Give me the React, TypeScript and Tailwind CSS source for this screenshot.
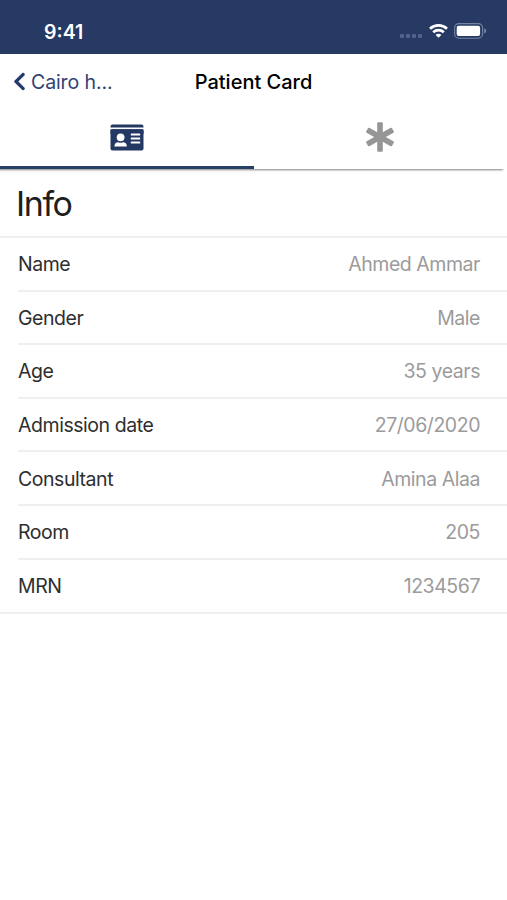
import { useState } from "react";
import { FaChevronLeft } from "react-icons/fa";

const INFO = [
  { label: "Name", value: "Ahmed Ammar" },
  { label: "Gender", value: "Male" },
  { label: "Age", value: "35 years" },
  { label: "Admission date", value: "27/06/2020" },
  { label: "Consultant", value: "Amina Alaa" },
  { label: "Room", value: "205" },
  { label: "MRN", value: "1234567" },
];

const TABS = [
  { key: "info", Icon: IdCardIcon },
  { key: "medical", Icon: AsteriskIcon },
];

function IdCardIcon() {
  return (
    <svg width="34" height="27" viewBox="0 0 34 27" fill="currentColor">
      <path d="M0.5 3.4 V2.4 A2 2 0 0 1 2.5 .4 H31.5 A2 2 0 0 1 33.5 2.4 V3.4 Z" />
      <rect x=".5" y="5.2" width="33" height="21.2" rx="2" />
      <path d="M.5 5.2 H33.5 V10 H.5 Z" />
      <g fill="white">
        <circle cx="10.6" cy="13.3" r="3.9" />
        <path d="M4.4 22.6 C4.4 19.8 6 18.3 8.2 18.3 C9.8 19 11.4 19 13 18.3 C15.2 18.3 16.9 19.8 16.9 22.6 Z" />
        <rect x="20.8" y="9.6" width="9.4" height="1.9" rx=".5" />
        <rect x="20.8" y="13.6" width="9.4" height="1.9" rx=".5" />
        <rect x="20.8" y="17.6" width="9.4" height="1.9" rx=".5" />
      </g>
    </svg>
  );
}

function AsteriskIcon() {
  return (
    <svg width="32" height="32" viewBox="-16 -16 32 32" fill="currentColor">
      <rect x="-2.8" y="-14.8" width="5.6" height="29.6" rx="1" />
      <rect x="-2.8" y="-14.8" width="5.6" height="29.6" rx="1" transform="rotate(61)" />
      <rect x="-2.8" y="-14.8" width="5.6" height="29.6" rx="1" transform="rotate(-61)" />
    </svg>
  );
}

function StatusBar() {
  return (
    <div className="flex h-[54px] items-center bg-[#263a63] pr-[20px] pl-[44px] pt-[8px] text-white">
      <span className="pt-px text-[19.5px] leading-6 font-semibold">9:41</span>
      <div className="ml-auto flex items-center">
        <div className="mt-[9px] mr-[7px] flex gap-[2px]">
          {[0, 1, 2, 3].map((i) => (
            <span key={i} className="h-1 w-1 rounded-[1px] bg-[#52638a]" />
          ))}
        </div>
        <svg width="19" height="14" viewBox="0 0 19 14" className="mr-[6px]" fill="none" stroke="white" strokeWidth="2.7">
          <path d="M1 4.8 C5.8 .3 13.2 .3 18 4.8" />
          <path d="M4.2 8.2 C7.2 5.4 11.8 5.4 14.8 8.2" />
          <path d="M9.5 13.8 L6.6 10.9 C8.2 9.5 10.8 9.5 12.4 10.9 Z" fill="white" stroke="none" />
        </svg>
        <svg width="33" height="16" viewBox="0 0 33 16">
          <rect x=".6" y=".6" width="28" height="14.6" rx="4.4" fill="none" stroke="#7785a3" strokeWidth="1.1" />
          <rect x="2.7" y="2.7" width="23.4" height="10.4" rx="2" fill="white" />
          <path d="M30.2 5.3 C32.8 6.2 32.8 9.6 30.2 10.5 Z" fill="#7785a3" />
        </svg>
      </div>
    </div>
  );
}

export default function App() {
  const [tab, setTab] = useState("info");

  return (
    <div className="h-[900px] w-[507px] overflow-hidden bg-white font-['Inter',sans-serif]">
      <StatusBar />

      <header className="grid h-[54px] grid-cols-[1fr_auto_1fr] items-center px-[13px] pt-[2px]">
        <button className="flex items-center gap-[5px] text-[19.5px] tracking-[-0.1px] text-[#304371]">
          <FaChevronLeft className="mb-[2px] h-[21px] w-[13px] text-[#233a6e]" />
          <span className="pt-px">Cairo h...</span>
        </button>
        <h1 className="text-[20px] font-medium text-black">Patient Card</h1>
      </header>

      <div className="grid h-[61px] grid-cols-2 shadow-[-3px_2px_2px_-1px_rgba(0,0,0,0.5)]">
        {TABS.map(({ key, Icon }) => (
          <button
            key={key}
            onClick={() => setTab(key)}
            className={
              tab === key
                ? "flex items-center justify-center border-b-[3px] border-[#263f64] text-[#233863]"
                : "flex items-center justify-center border-b-[3px] border-transparent text-[#969696]"
            }
          >
            <Icon />
          </button>
        ))}
      </div>

      <section>
        <h2 className="flex h-[69px] items-center border-b-2 border-[#efefef] pl-4 pt-[2px] text-[34px] tracking-[-1.4px] text-[#1e1e1e]">
          Info
        </h2>
        <ul className="border-b-2 border-[#efefef]">
          {INFO.map((row) => (
            <li key={row.label} className="group pl-[18px]">
              <div className="flex h-[53.6px] items-center justify-between border-b-2 border-[#efefef] pt-[2px] pr-[27px] text-[19.5px] tracking-[-0.45px] group-last:h-[52px] group-last:border-0">
                <span className="text-[#2e2e2e]">{row.label}</span>
                <span className="text-[#9b9b9b]">{row.value}</span>
              </div>
            </li>
          ))}
        </ul>
      </section>
    </div>
  );
}
